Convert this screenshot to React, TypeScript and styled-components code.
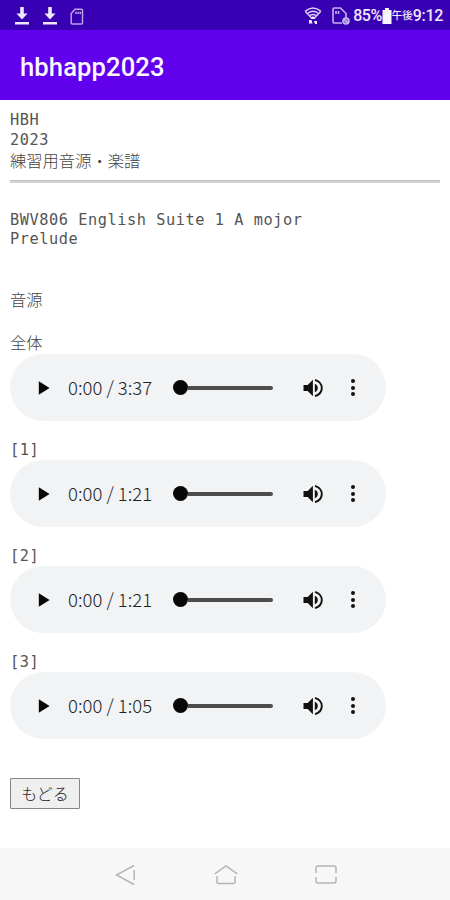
import React from 'react';
import styled, { createGlobalStyle } from 'styled-components';

const GlobalStyle = createGlobalStyle`
  * { box-sizing: border-box; }
  body { margin: 0; background: #fff; }
`;

const Screen = styled.div`
  width: 450px;
  height: 900px;
  display: flex;
  flex-direction: column;
  background: #fff;
  overflow: hidden;
`;

const StatusBar = styled.div`
  height: 30px;
  flex: none;
  display: flex;
  align-items: center;
  justify-content: space-between;
  padding: 2px 7px 0 14px;
  background: #3900b3;
  color: #eee8fb;
`;

const StatusGroup = styled.div<{ $gap: number }>`
  display: flex;
  align-items: center;
  gap: ${p => p.$gap}px;
`;

const StatusText = styled.span<{ $size?: number; $spacing?: number }>`
  font-family: Roboto, 'Noto Sans CJK JP', sans-serif;
  font-size: ${p => p.$size ?? 16}px;
  font-weight: 500;
  line-height: 20px;
  letter-spacing: ${p => p.$spacing ?? 0}px;
  white-space: nowrap;
`;

const StatusIcons = styled(StatusGroup)`
  margin-right: 3px;
`;

const AppBar = styled.header`
  height: 70px;
  flex: none;
  display: flex;
  align-items: center;
  padding: 3px 20px 0;
  background: #6000ec;
`;

const Title = styled.h1`
  margin: 0;
  color: #fbf8ff;
  font: 500 25.6px/30px Roboto, sans-serif;
  letter-spacing: 0.1px;
`;

const Content = styled.main`
  flex: 1;
  padding: 10px 10px 0;
  display: flex;
  flex-direction: column;
  align-items: flex-start;
`;

const Line = styled.div<{ $height?: number; $top?: number }>`
  height: ${p => p.$height ?? 20}px;
  margin-top: ${p => p.$top ?? 0}px;
  line-height: ${p => p.$height ?? 20}px;
  color: #555;
  font-family: 'DejaVu Sans Mono', 'Noto Sans CJK JP', monospace;
  font-size: 15.3px;
  letter-spacing: 0.54px;
  white-space: pre;
`;

const JapaneseLine = styled(Line)`
  color: #444;
  font-family: 'Noto Sans CJK JP', sans-serif;
  font-size: 16.3px;
  font-weight: 300;
  letter-spacing: 0;
`;

const Rule = styled.hr`
  width: 430px;
  height: 3px;
  margin: 9px 0 0;
  border: 0;
  border-top: 1px solid #c2c2c2;
  background: #d2d2d2;
`;

const Player = styled.div`
  width: 376px;
  height: 67px;
  flex: none;
  display: flex;
  align-items: center;
  padding-left: 28px;
  border-radius: 34px;
  background: #f1f3f4;
`;

const Time = styled.span`
  width: 85px;
  margin-left: 18px;
  padding-bottom: 2px;
  color: #222;
  font: 300 18.5px/24px 'Noto Sans CJK JP', sans-serif;
  white-space: nowrap;
`;

const Track = styled.div`
  width: 100px;
  height: 16px;
  margin: 0 30px 0 20px;
  display: flex;
  align-items: center;
`;

const Knob = styled.span`
  width: 15px;
  height: 15px;
  flex: none;
  border-radius: 50%;
  background: #080808;
`;

const Bar = styled.span`
  width: 85px;
  height: 4px;
  border-radius: 0 2px 2px 0;
  background: #4d4d4d;
`;

const Dots = styled.span`
  height: 17px;
  width: 5px;
  margin-left: 27px;
  display: flex;
  flex-direction: column;
  align-items: center;
  justify-content: space-between;
`;

const Dot = styled.i`
  width: 4px;
  height: 4px;
  border-radius: 50%;
  background: #111;
`;

const BackButton = styled.button`
  width: 70px;
  height: 31px;
  margin: 39px 0 0;
  padding: 0 0 2px;
  border: 1px solid #858585;
  border-radius: 1px;
  background: #efefef;
  color: #222;
  font: 300 16px/26px 'Noto Sans CJK JP', sans-serif;
`;

const NavBar = styled.nav`
  height: 52px;
  flex: none;
  display: flex;
  align-items: center;
  justify-content: center;
  gap: 76px;
  padding: 1px 0 0 1px;
  background: #f7f7f7;
`;

const Download = () => (
  <svg width="16" height="18" viewBox="0 0 16 18" fill="currentColor">
    <path d="M6.2 0h3.6v6.5h3.7L8 12.5l-5.5-6h3.7zM1 15h14v2.5H1z" />
  </svg>
);

const SdCard = () => (
  <svg width="14" height="17" viewBox="0 0 14 17" fill="none" stroke="#b9a3e8" strokeWidth="1.5">
    <path d="M5 1.2h6.5q1 0 1 1V15q0 1-1 1H2.2q-1 0-1-1V5.5zM6 3.8V6M8.2 3.8V6M10.3 3.8V6" />
  </svg>
);

const Wifi = () => (
  <svg width="18" height="18" viewBox="0 0 18 18" fill="none" stroke="#d9cdf3" strokeWidth="1.5">
    <path d="M1 4.4Q9-2.3 17 4.4M1.3 4.5 7.6 11M16.7 4.5 10.4 11M4 6Q9 2.4 14 6M6 8.5q3-2 6 0" />
    <path d="M9 9l2.5 3h-5zM5 13h2.5l1 3.5H5zM10 14h3v3h-2z" fill="#f2edfc" stroke="none" />
  </svg>
);

const SimCard = () => (
  <svg width="18" height="18" viewBox="0 0 18 18" fill="none" stroke="#c4b1ec" strokeWidth="1.6">
    <path d="M10 16H2.2Q1 16 1 14.8V2.2Q1 1 2.2 1h6.3L14 6.5V11M4 4v3M6.5 4v3" />
    <circle cx="14" cy="14" r="3" fill="#8c69d6" />
    <path d="m12 12 4 4" />
  </svg>
);

const Battery = () => (
  <svg width="10" height="16" viewBox="0 0 10 16" fill="#f7f4fd">
    <path d="M3 0h4v2h2.5v14H.5V2H3z" />
  </svg>
);

const Play = () => (
  <svg width="12" height="14" viewBox="0 0 12 14" fill="#080808">
    <path d="M.8.2 11.6 7 .8 13.8z" />
  </svg>
);

const Volume = () => (
  <svg width="20" height="20" viewBox="0 0 20 20" fill="#111">
    <path d="M.5 7h4.2l5.2-5.2v16.4L4.7 13H.5zM11.8 5.8q3 1.3 3 4.2t-3 4.2z" />
    <path d="M12 1.8q6.8 2.2 6.8 8.2T12 18.2" fill="none" stroke="#111" strokeWidth="1.9" />
  </svg>
);

const NavIcon = ({ d }: { d: string }) => (
  <svg width="24" height="22" viewBox="0 0 24 22" fill="none" stroke="#b5b5b5" strokeWidth="1.5">
    <path d={d} />
  </svg>
);

const AudioPlayer = ({ duration }: { duration: string }) => (
  <Player>
    <Play />
    <Time>0:00 / {duration}</Time>
    <Track><Knob /><Bar /></Track>
    <Volume />
    <Dots><Dot /><Dot /><Dot /></Dots>
  </Player>
);

const parts = [
  { label: '[1]', duration: '1:21' },
  { label: '[2]', duration: '1:21' },
  { label: '[3]', duration: '1:05' },
];

export default function App() {
  return (
    <Screen>
      <GlobalStyle />
      <StatusBar>
        <StatusGroup $gap={12}><Download /><Download /><SdCard /></StatusGroup>
        <StatusGroup $gap={0}>
          <StatusIcons $gap={10}><Wifi /><SimCard /></StatusIcons>
          <StatusText $spacing={-0.5}>85%</StatusText>
          <Battery />
          <StatusText $size={10.5}>午後</StatusText>
          <StatusText $spacing={-0.3}>9:12</StatusText>
        </StatusGroup>
      </StatusBar>
      <AppBar><Title>hbhapp2023</Title></AppBar>
      <Content>
        <Line>HBH</Line>
        <Line $height={20}>2023</Line>
        <JapaneseLine $height={21}>練習用音源・楽譜</JapaneseLine>
        <Rule />
        <Line $top={27}>BWV806 English Suite 1 A mojor</Line>
        <Line $height={19}>Prelude</Line>
        <JapaneseLine $top={39} $height={22}>音源</JapaneseLine>
        <JapaneseLine $top={21} $height={23}>全体</JapaneseLine>
        <AudioPlayer duration="3:37" />
        {parts.map(part => (
          <React.Fragment key={part.label}>
            <Line $top={19}>{part.label}</Line>
            <AudioPlayer duration={part.duration} />
          </React.Fragment>
        ))}
        <BackButton>もどる</BackButton>
      </Content>
      <NavBar>
        <NavIcon d="M20 1.5 2.5 11 20 20.5M20.2 6v10" />
        <NavIcon d="M.8 9.8 12 1.8l11.2 8M3 12v5.5q0 2 2 2h14q2 0 2-2V12" />
        <NavIcon d="M2 9V4q0-2 2-2h16q2 0 2 2v5M2 13v4q0 2 2 2h16q2 0 2-2v-4" />
      </NavBar>
    </Screen>
  );
}
